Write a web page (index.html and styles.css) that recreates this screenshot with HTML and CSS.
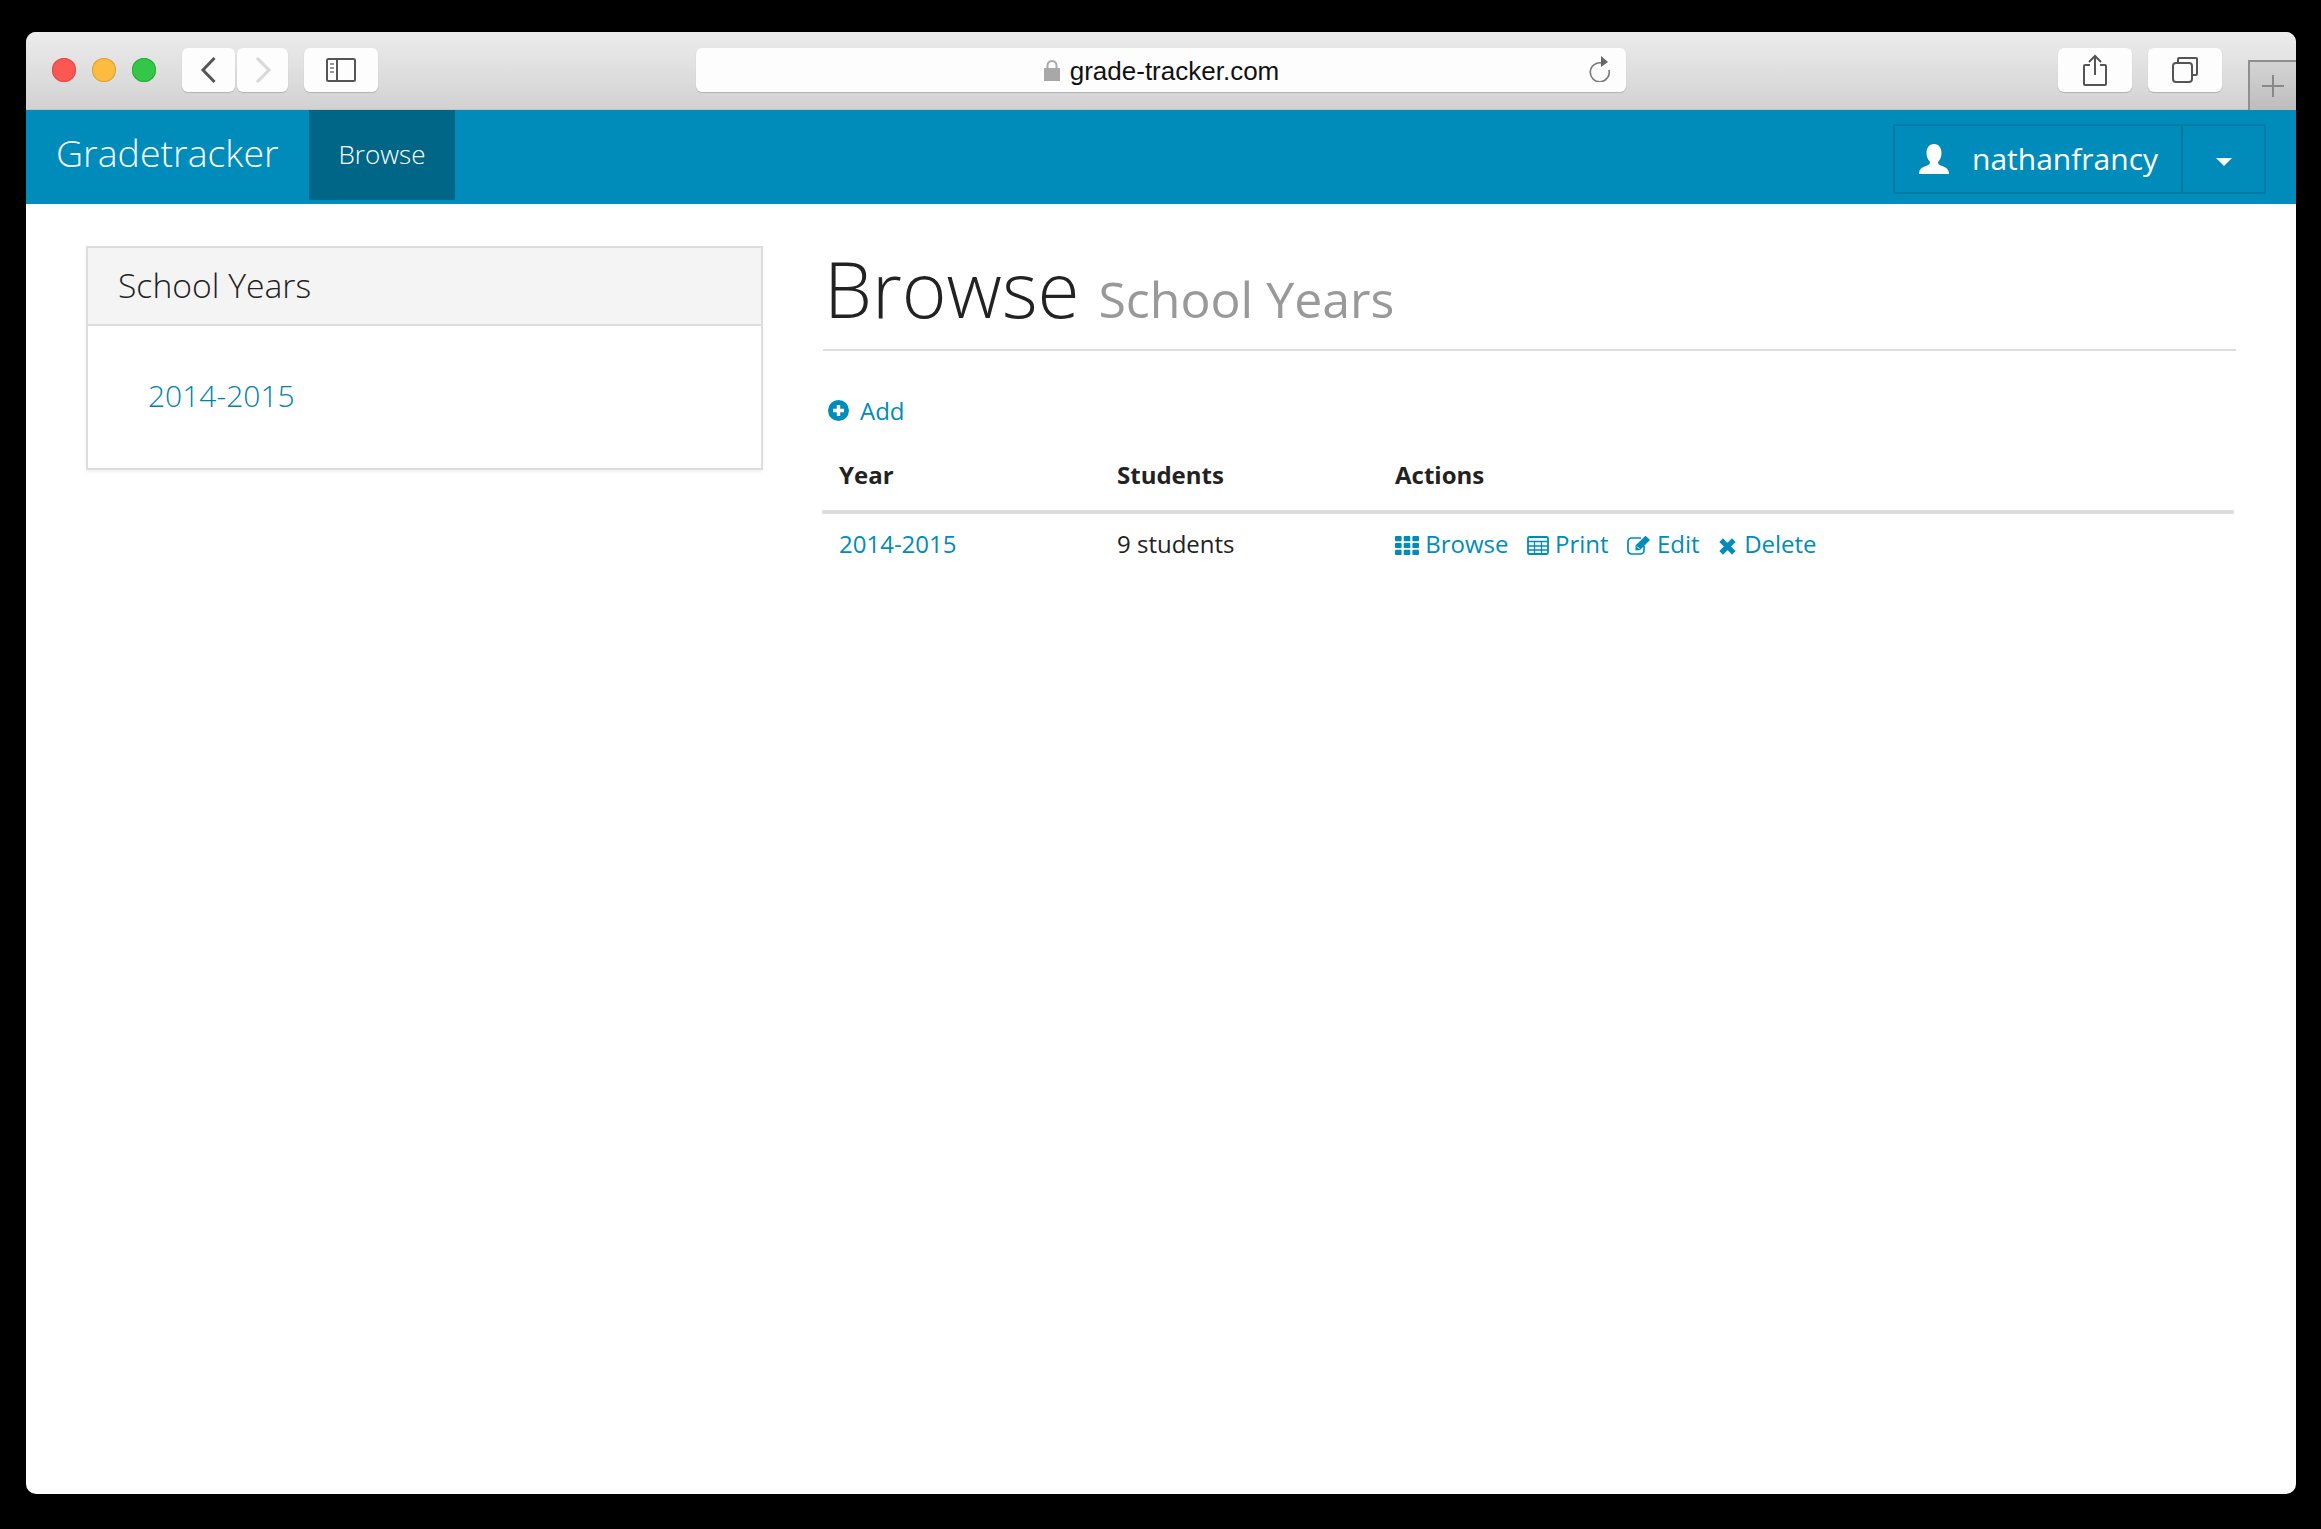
FILE: index.html
```html
<!DOCTYPE html>
<html lang="en">
<head>
    <meta charset="UTF-8">
    <meta name="viewport" content="width=device-width, initial-scale=1.0">
    <title>Gradetracker</title>
    <link rel="stylesheet" href="styles.css">
</head>
<body>

    <div class="browser-window">

        <!-- Safari toolbar -->
        <div class="browser-toolbar">
            <span class="browser-dot browser-dot-red"></span>
            <span class="browser-dot browser-dot-yellow"></span>
            <span class="browser-dot browser-dot-green"></span>

            <span class="browser-btn browser-btn-back">
                <svg width="18" height="28" viewBox="0 0 18 28"><path d="M14.5 2 L3 14 L14.5 26" fill="none" stroke="#555" stroke-width="3"/></svg>
            </span>
            <span class="browser-btn browser-btn-forward">
                <svg width="18" height="28" viewBox="0 0 18 28"><path d="M3 2 L15 14 L3 26" fill="none" stroke="#d8d8d8" stroke-width="3"/></svg>
            </span>
            <span class="browser-btn browser-btn-sidebar">
                <svg width="30" height="24" viewBox="0 0 30 24">
                    <rect x="1" y="1" width="28" height="22" rx="1.5" fill="none" stroke="#555" stroke-width="2"/>
                    <path d="M11 1 V23" stroke="#555" stroke-width="2"/>
                    <path d="M4 6 H8 M4 10 H8 M4 14 H8" stroke="#999" stroke-width="2"/>
                </svg>
            </span>

            <div class="browser-url">
                <svg class="browser-lock" width="18" height="22" viewBox="0 0 18 22">
                    <path d="M4.5 10 V6.5 a4.5 4.5 0 0 1 9 0 V10" fill="none" stroke="#a8a8a8" stroke-width="2"/>
                    <rect x="1" y="9" width="16" height="13" fill="#a8a8a8"/>
                </svg>
                <span class="browser-url-text">grade-tracker.com</span>
                <svg class="browser-reload" width="24" height="28" viewBox="0 0 24 28">
                    <path d="M14 7 A9.5 9.5 0 1 0 21 14" transform="translate(0 2)" fill="none" stroke="#777" stroke-width="1.6"/>
                    <path d="M13 2 L20 8 L13 13 Z" fill="#666"/>
                </svg>
            </div>

            <span class="browser-btn browser-btn-share">
                <svg width="24" height="32" viewBox="0 0 24 32">
                    <path d="M7 11 H2 a1 1 0 0 0 -1 1 V30 a1 1 0 0 0 1 1 H22 a1 1 0 0 0 1 -1 V12 a1 1 0 0 0 -1 -1 H17" fill="none" stroke="#555" stroke-width="2"/>
                    <path d="M12 21 V2 M6 8 L12 2 L18 8" fill="none" stroke="#555" stroke-width="2"/>
                </svg>
            </span>
            <span class="browser-btn browser-btn-tabs">
                <svg width="26" height="26" viewBox="0 0 26 26">
                    <path d="M6 6 V2 a1 1 0 0 1 1 -1 H24 a1 1 0 0 1 1 1 V17 a1 1 0 0 1 -1 1 H21" fill="none" stroke="#555" stroke-width="2"/>
                    <rect x="1" y="6" width="19" height="19" rx="3" fill="none" stroke="#555" stroke-width="2"/>
                </svg>
            </span>

            <span class="browser-newtab">
                <svg width="24" height="24" viewBox="0 0 24 24"><path d="M12 1 V23 M1 12 H23" stroke="#888" stroke-width="2"/></svg>
            </span>
        </div>

        <!-- Navbar -->
        <nav class="site-nav">
            <a class="site-brand">Gradetracker</a>
            <a class="site-nav-link site-nav-active">Browse</a>

            <div class="user-btn-group">
                <span class="user-btn">
                    <svg width="30" height="30" viewBox="0 0 30 30">
                        <path d="M15 0 C20 0 22.5 4 22.5 9 C22.5 13 21 16 19 18 C19 20 20 21 23 22 C27 23.5 30 25 30 30 H0 C0 25 3 23.5 7 22 C10 21 11 20 11 18 C9 16 7.5 13 7.5 9 C7.5 4 10 0 15 0 Z" fill="#fff"/>
                    </svg>
                    <span class="user-name">nathanfrancy</span>
                </span>
                <span class="user-caret-btn"><span class="user-caret"></span></span>
            </div>
        </nav>

        <!-- Page content -->
        <div class="page-content">
            <aside class="side-panel">
                <h3 class="side-panel-heading">School Years</h3>
                <div class="side-panel-body">
                    <a class="side-panel-link">2014-2015</a>
                </div>
            </aside>

            <main class="main-column">
                <h1 class="page-title">Browse <small class="page-subtitle">School Years</small></h1>

                <a class="add-link">
                    <svg class="add-icon" width="21" height="21" viewBox="0 0 21 21">
                        <circle cx="10.5" cy="10.5" r="10.5" fill="#008cba"/>
                        <path d="M10.5 5 V16 M5 10.5 H16" stroke="#fff" stroke-width="3.4"/>
                    </svg>
                    Add
                </a>

                <table class="years-table">
                    <thead>
                        <tr>
                            <th class="col-year">Year</th>
                            <th class="col-students">Students</th>
                            <th>Actions</th>
                        </tr>
                    </thead>
                    <tbody>
                        <tr>
                            <td><a>2014-2015</a></td>
                            <td>9 students</td>
                            <td class="row-actions">
                                <a>
                                    <svg width="24" height="19" viewBox="0 0 24 19" fill="#008cba">
                                        <rect x="0" y="0" width="6.6" height="5.2" rx="1"/><rect x="8.7" y="0" width="6.6" height="5.2" rx="1"/><rect x="17.4" y="0" width="6.6" height="5.2" rx="1"/>
                                        <rect x="0" y="6.9" width="6.6" height="5.2" rx="1"/><rect x="8.7" y="6.9" width="6.6" height="5.2" rx="1"/><rect x="17.4" y="6.9" width="6.6" height="5.2" rx="1"/>
                                        <rect x="0" y="13.8" width="6.6" height="5.2" rx="1"/><rect x="8.7" y="13.8" width="6.6" height="5.2" rx="1"/><rect x="17.4" y="13.8" width="6.6" height="5.2" rx="1"/>
                                    </svg>
                                    Browse
                                </a>
                                <a>
                                    <svg width="22" height="19" viewBox="0 0 22 19">
                                        <rect x="1" y="1" width="20" height="17" rx="1.5" fill="none" stroke="#008cba" stroke-width="1.8"/>
                                        <path d="M1 5.5 H21 M1 10 H21 M1 14 H21 M7.5 5 V18 M14.5 5 V18" stroke="#008cba" stroke-width="1.3"/>
                                    </svg>
                                    Print
                                </a>
                                <a>
                                    <svg width="24" height="20" viewBox="0 0 24 20">
                                        <path d="M14 3 H4.5 a3.5 3.5 0 0 0 -3.5 3.5 V15.5 a3.5 3.5 0 0 0 3.5 3.5 H13.5 a3.5 3.5 0 0 0 3.5 -3.5 V11" fill="none" stroke="#008cba" stroke-width="1.7"/>
                                        <path d="M8.5 10.5 L18.5 0.8 L23 5 L13 15 L8.5 15.5 Z" fill="#008cba"/>
                                        <path d="M10 11.5 L12.5 14" stroke="#fff" stroke-width="1"/>
                                    </svg>
                                    Edit
                                </a>
                                <a>
                                    <svg class="delete-icon" width="17" height="17" viewBox="0 0 17 17"><path d="M4 4 L13 13 M13 4 L4 13" stroke="#008cba" stroke-width="5.2" stroke-linecap="square"/></svg>
                                    Delete
                                </a>
                            </td>
                        </tr>
                    </tbody>
                </table>
            </main>
        </div>
    </div>

</body>
</html>
```

FILE: styles.css
```css
/* Page and window frame */
* {
    box-sizing: border-box;
}

html,
body {
    height: 100%;
}

body {
    margin: 0;
    padding: 32px 25px 35px 26px;
    background-color: #000;
    font-family: 'Open Sans', 'Noto Sans', sans-serif;
    color: #222;
}

.browser-window {
    height: 100%;
    display: flex;
    flex-direction: column;
    background-color: #fff;
    border-radius: 10px;
    overflow: hidden;
}

/* Safari toolbar */
.browser-toolbar {
    flex: none;
    height: 78px;
    display: flex;
    align-items: flex-start;
    padding: 16px 0 0 26px;
    background: linear-gradient(#ececec, #d2d2d2);
    border-bottom: 1px solid #c4c4c4;
}

.browser-dot {
    width: 24px;
    height: 24px;
    margin: 10px 16px 0 0;
    border-radius: 50%;
}

.browser-dot-red {
    background-color: #fc5753;
    box-shadow: inset 0 0 0 1px #df4744;
}

.browser-dot-yellow {
    background-color: #fdbc40;
    box-shadow: inset 0 0 0 1px #de9f34;
}

.browser-dot-green {
    background-color: #33c748;
    margin-right: 26px;
    box-shadow: inset 0 0 0 1px #27aa35;
}

.browser-btn {
    height: 44px;
    display: flex;
    align-items: center;
    justify-content: center;
    background-color: #fdfdfd;
    border-radius: 6px;
    box-shadow: 0 1px 1px rgba(0, 0, 0, 0.18);
}

.browser-btn-back {
    width: 53px;
    margin-right: 2px;
}

.browser-btn-forward {
    width: 51px;
    margin-right: 16px;
}

.browser-btn-sidebar {
    width: 74px;
}

.browser-btn-share {
    width: 74px;
    margin: 0 16px 0 432px;
}

.browser-btn-tabs {
    width: 74px;
    margin-right: 26px;
}

.browser-url {
    width: 930px;
    height: 44px;
    margin-left: 318px;
    display: flex;
    align-items: center;
    justify-content: center;
    position: relative;
    background-color: #fdfdfd;
    border-radius: 6px;
    box-shadow: 0 1px 1px rgba(0, 0, 0, 0.18);
}

.browser-lock {
    margin-right: 9px;
}

.browser-url-text {
    padding-top: 2px;
    font-family: 'Liberation Sans', Arial, sans-serif;
    font-size: 26px;
    color: #111;
}

.browser-reload {
    position: absolute;
    right: 14px;
    top: 6px;
}

.browser-newtab {
    width: 48px;
    height: 50px;
    margin-top: 12px;
    display: flex;
    align-items: center;
    justify-content: center;
    background: linear-gradient(#d4d4d4, #bdbdbd);
    border-top: 2px solid #8f8f8f;
    border-left: 2px solid #8f8f8f;
}

/* Navbar */
.site-nav {
    flex: none;
    height: 94px;
    display: flex;
    align-items: flex-start;
    background-color: #008cba;
    color: #fff;
}

.site-brand {
    width: 283px;
    padding-left: 30px;
    font-size: 37.5px;
    font-weight: 300;
    line-height: 86px;
}

.site-nav-link {
    width: 146px;
    height: 90px;
    font-size: 26px;
    font-weight: 300;
    line-height: 88px;
    text-align: center;
}

.site-nav-active {
    background-color: #006687;
}

.user-btn-group {
    display: flex;
    height: 70px;
    margin: 14px 30px 0 auto;
    border: 2px solid #007ba4;
}

.user-btn {
    width: 288px;
    display: flex;
    align-items: center;
    padding-left: 24px;
    border-right: 2px solid #007ba4;
}

.user-name {
    margin: 0 0 2px 23px;
    font-size: 30px;
}

.user-caret-btn {
    width: 81px;
    display: flex;
    align-items: center;
    justify-content: center;
}

.user-caret {
    margin-top: 6px;
    border-top: 8px solid #fff;
    border-left: 8px solid transparent;
    border-right: 8px solid transparent;
}

/* Page content */
.page-content {
    flex: 1;
    display: grid;
    grid-template-columns: 677px 1413px;
    column-gap: 60px;
    align-items: start;
    padding: 42px 60px 0;
}

.side-panel {
    height: 224px;
    border: 2px solid #ddd;
    box-shadow: 0 2px 3px rgba(0, 0, 0, 0.06);
}

.side-panel-heading {
    height: 78px;
    margin: 0;
    padding-left: 30px;
    font-size: 33.7px;
    font-weight: 300;
    line-height: 74px;
    background-color: #f4f4f4;
    border-bottom: 2px solid #ddd;
}

.side-panel-body {
    padding: 48px 0 0 60px;
}

.side-panel-link {
    font-size: 30px;
    font-weight: 300;
    line-height: 44px;
    color: #0082ad;
}

.page-title {
    height: 105px;
    margin: 0;
    padding-left: 1px;
    font-size: 76.5px;
    font-weight: 300;
    line-height: 84px;
    color: #222;
    border-bottom: 2px solid #ddd;
}

.page-subtitle {
    margin-left: -1px;
    font-size: 50px;
    font-weight: 400;
    color: #999;
}

.add-link {
    display: flex;
    align-items: center;
    height: 34px;
    margin: 42px 0 0 5px;
    font-size: 24px;
    color: #008cba;
}

.add-icon {
    margin-right: 11px;
}

.years-table {
    width: 1412px;
    margin: 21px 0 0 -1px;
    border-collapse: collapse;
    font-size: 24px;
}

.years-table th {
    height: 64px;
    padding: 0 16px 10px 17px;
    text-align: left;
    font-weight: 700;
    border-bottom: 4px solid #ddd;
}

.years-table td {
    height: 60px;
    padding: 0 16px 0 17px;
}

.col-year,
.col-students {
    width: 278px;
}

.years-table a {
    color: #008cba;
}

.row-actions a {
    margin-right: 12px;
}

.row-actions svg {
    vertical-align: -2px;
}

.delete-icon {
    margin: 0 2px 0 1px;
}
```
